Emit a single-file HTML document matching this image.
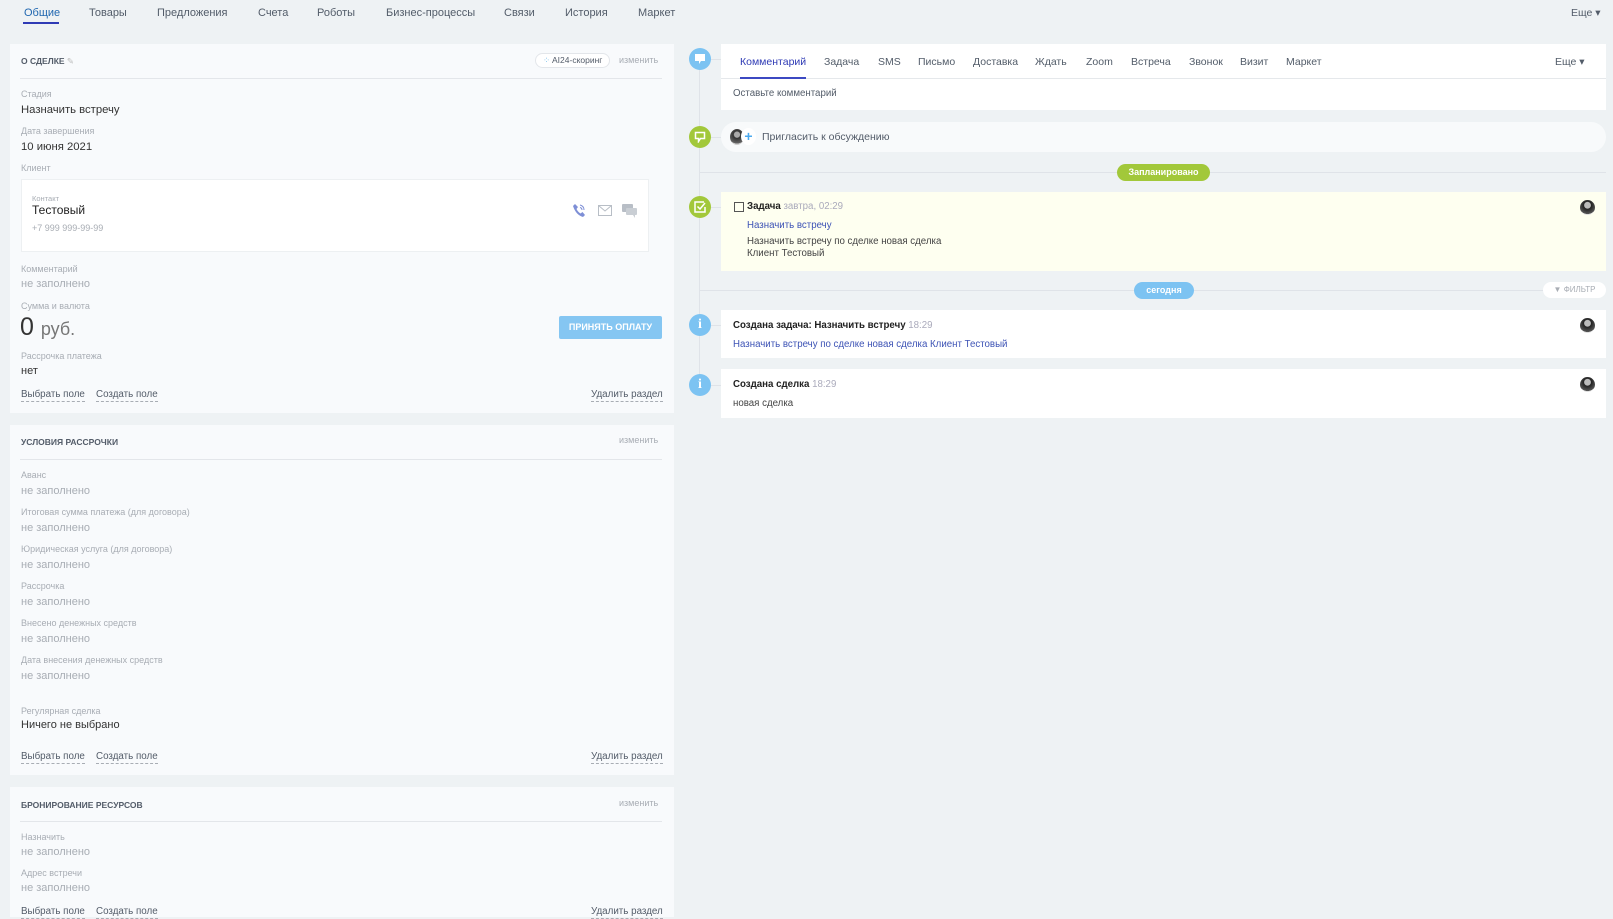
<!DOCTYPE html>
<html><head><meta charset="utf-8">
<style>
*{margin:0;padding:0;box-sizing:border-box}
body{width:1613px;height:911px;background:#eef2f4;font-family:"Liberation Sans",Arial,sans-serif;color:#333;position:relative;overflow:hidden}
.a{position:absolute;white-space:nowrap}
.tab{font-size:11px;color:#525c69;top:7px}
.card{position:absolute;background:#f8fafc;left:10px;width:664px}
.lbl{font-size:9px;color:#a8adb4}
.val{font-size:11.3px;color:#333}
.emp{font-size:11px;color:#a8adb4}
.hdr{font-size:8.5px;font-weight:bold;color:#535c69}
.chg{font-size:9px;color:#a8adb4}
.hr{position:absolute;height:1px;background:#e3e6ea;left:10px;width:642px}
.lnk{font-size:9.8px;color:#535c69;border-bottom:1px dashed #a8adb4;line-height:12px}
.rc{position:absolute;left:721px;width:885px;background:#fff}
.dot{position:absolute;left:689px;width:22px;height:22px;border-radius:50%}
.ttab{font-size:10.5px;color:#525c69;top:56px}
.av{position:absolute;left:1580px;width:15px;height:15px;border-radius:50%;background:radial-gradient(circle at 50% 35%,#bbb 0 25%,#222 30%,#555 70%,#ddd 72%)}
.s{font-size:9.7px}
</style></head><body>
<div class="a tab" style="left:24px;color:#2067b0">Общие</div>
<div class="a" style="left:23px;top:22px;width:36px;height:2px;background:#2f3bb5"></div>
<div class="a tab" style="left:89px">Товары</div>
<div class="a tab" style="left:157px">Предложения</div>
<div class="a tab" style="left:258px">Счета</div>
<div class="a tab" style="left:317px">Роботы</div>
<div class="a tab" style="left:386px">Бизнес-процессы</div>
<div class="a tab" style="left:504px">Связи</div>
<div class="a tab" style="left:565px">История</div>
<div class="a tab" style="left:638px">Маркет</div>
<div class="a tab" style="left:1571px;font-size:10.5px">Еще ▾</div>

<div class="card" style="top:44px;height:369px"></div>
<div class="a hdr" style="left:21px;top:56px">О СДЕЛКЕ <span style="color:#bbb;font-weight:normal">✎</span></div>
<div class="a" style="left:535px;top:53px;height:15px;padding:0 7px;border:1px solid #e3e6ea;border-radius:8px;background:#fff;font-size:8.5px;line-height:13px;color:#535c69"><span style="color:#7ac0ea">⁘</span> AI24-скоринг</div>
<div class="a chg" style="left:619px;top:55px">изменить</div>
<div class="hr" style="left:20px;top:78px;width:642px"></div>
<div class="a lbl" style="left:21px;top:89px">Стадия</div>
<div class="a val" style="left:21px;top:104px">Назначить встречу</div>
<div class="a lbl" style="left:21px;top:126px">Дата завершения</div>
<div class="a val" style="left:21px;top:141px">10 июня 2021</div>
<div class="a lbl" style="left:21px;top:163px">Клиент</div>
<div class="a" style="left:21px;top:179px;width:628px;height:73px;background:#fff;border:1px solid #edf0f2"></div>
<div class="a" style="left:32px;top:194px;font-size:7.5px;color:#a8adb4">Контакт</div>
<div class="a" style="left:32px;top:203px;font-size:12px;color:#222">Тестовый</div>
<div class="a" style="left:32px;top:223px;font-size:9px;color:#a8adb4">+7 999 999-99-99</div>
<svg class="a" style="left:572px;top:203px" width="14" height="15" viewBox="0 0 14 15"><path d="M3 1 L6 4 L4.5 6 Q6 9 8.5 10.5 L10.5 9 L13 12 L11 14 Q4 12 1 3 Z" fill="#7e8fd6"/><path d="M8 2 Q12 3 12 7 M8 4.5 Q10 5 10 7" stroke="#7e8fd6" fill="none"/></svg>
<svg class="a" style="left:598px;top:205px" width="14" height="11"><rect x="0.5" y="0.5" width="13" height="10" fill="none" stroke="#b8bec6"/><path d="M0.5 0.5 L7 6 L13.5 0.5" fill="none" stroke="#b8bec6"/></svg>
<svg class="a" style="left:622px;top:204px" width="15" height="14"><rect x="0" y="0" width="11" height="8" rx="1" fill="#b8bec6"/><rect x="4" y="4" width="11" height="7" rx="1" fill="#c9ced4"/><path d="M11 11 L13 14 L13 11Z" fill="#c9ced4"/></svg>
<div class="a lbl" style="left:21px;top:264px">Комментарий</div>
<div class="a emp" style="left:21px;top:278px">не заполнено</div>
<div class="a lbl" style="left:21px;top:301px">Сумма и валюта</div>
<div class="a" style="left:20px;top:313px;font-size:25px;color:#333">0 <span style="font-size:18px;color:#777">руб.</span></div>
<div class="a" style="left:559px;top:316px;width:103px;height:23px;background:#85c6f2;color:#fff;font-size:9px;font-weight:bold;text-align:center;line-height:23px;border-radius:2px">ПРИНЯТЬ ОПЛАТУ</div>
<div class="a lbl" style="left:21px;top:351px">Рассрочка платежа</div>
<div class="a val" style="left:21px;top:365px;font-size:11px">нет</div>
<div class="a lnk" style="left:21px;top:389px">Выбрать поле</div>
<div class="a lnk" style="left:96px;top:389px">Создать поле</div>
<div class="a lnk" style="left:591px;top:389px">Удалить раздел</div>

<div class="card" style="top:425px;height:350px"></div>
<div class="a hdr" style="left:21px;top:437px">УСЛОВИЯ РАССРОЧКИ</div>
<div class="a chg" style="left:619px;top:435px">изменить</div>
<div class="hr" style="left:20px;top:459px"></div>
<div class="a lbl" style="left:21px;top:470px">Аванс</div><div class="a emp" style="left:21px;top:485px">не заполнено</div>
<div class="a lbl" style="left:21px;top:507px">Итоговая сумма платежа (для договора)</div><div class="a emp" style="left:21px;top:522px">не заполнено</div>
<div class="a lbl" style="left:21px;top:544px">Юридическая услуга (для договора)</div><div class="a emp" style="left:21px;top:559px">не заполнено</div>
<div class="a lbl" style="left:21px;top:581px">Рассрочка</div><div class="a emp" style="left:21px;top:596px">не заполнено</div>
<div class="a lbl" style="left:21px;top:618px">Внесено денежных средств</div><div class="a emp" style="left:21px;top:633px">не заполнено</div>
<div class="a lbl" style="left:21px;top:655px">Дата внесения денежных средств</div><div class="a emp" style="left:21px;top:670px">не заполнено</div>
<div class="a lbl" style="left:21px;top:706px">Регулярная сделка</div><div class="a val" style="left:21px;top:719px;font-size:11px">Ничего не выбрано</div>
<div class="a lnk" style="left:21px;top:751px">Выбрать поле</div>
<div class="a lnk" style="left:96px;top:751px">Создать поле</div>
<div class="a lnk" style="left:591px;top:751px">Удалить раздел</div>

<div class="card" style="top:787px;height:130px"></div>
<div class="a hdr" style="left:21px;top:800px">БРОНИРОВАНИЕ РЕСУРСОВ</div>
<div class="a chg" style="left:619px;top:798px">изменить</div>
<div class="hr" style="left:20px;top:821px"></div>
<div class="a lbl" style="left:21px;top:832px">Назначить</div><div class="a emp" style="left:21px;top:846px">не заполнено</div>
<div class="a lbl" style="left:21px;top:868px">Адрес встречи</div><div class="a emp" style="left:21px;top:882px">не заполнено</div>
<div class="a lnk" style="left:21px;top:906px">Выбрать поле</div>
<div class="a lnk" style="left:96px;top:906px">Создать поле</div>
<div class="a lnk" style="left:591px;top:906px">Удалить раздел</div>

<div class="a" style="left:699px;top:60px;width:1px;height:326px;background:#dfe3e8"></div>
<div class="a" style="left:700px;top:59px;width:21px;height:1px;background:#dfe3e8"></div>
<div class="a" style="left:700px;top:137px;width:21px;height:1px;background:#dfe3e8"></div>
<div class="a" style="left:700px;top:207px;width:21px;height:1px;background:#dfe3e8"></div>
<div class="a" style="left:700px;top:325px;width:21px;height:1px;background:#dfe3e8"></div>
<div class="a" style="left:700px;top:385px;width:21px;height:1px;background:#dfe3e8"></div>

<div class="dot" style="top:48px;background:#7cc3f2"></div>
<svg class="a" style="left:694px;top:53px" width="12" height="12"><path d="M1 1 H11 V8 H7 L5 11 L5 8 H1Z" fill="#fff"/></svg>
<div class="dot" style="top:126px;background:#a2c83a"></div>
<svg class="a" style="left:694px;top:131px" width="12" height="12"><path d="M1.5 1.5 H10.5 V7.5 H6.5 L4.5 10.5 V7.5 H1.5Z" fill="none" stroke="#fff" stroke-width="1.5"/></svg>
<div class="dot" style="top:196px;background:#a2c83a"></div>
<svg class="a" style="left:694px;top:201px" width="12" height="12"><path d="M10 1 H1 V11 H11 V6" fill="none" stroke="#fff" stroke-width="1.5"/><path d="M3.5 5.5 L6 8 L11 2" fill="none" stroke="#fff" stroke-width="1.5"/></svg>
<div class="dot" style="top:314px;background:#7cc3f2"></div>
<div class="a" style="left:689px;top:317px;width:22px;text-align:center;color:#fff;font-size:14px;font-weight:bold;font-family:'Liberation Serif',serif">i</div>
<div class="dot" style="top:374px;background:#7cc3f2"></div>
<div class="a" style="left:689px;top:377px;width:22px;text-align:center;color:#fff;font-size:14px;font-weight:bold;font-family:'Liberation Serif',serif">i</div>

<div class="rc" style="top:44px;height:66px"></div>
<div class="a" style="left:721px;top:78px;width:885px;height:1px;background:#e5e8eb"></div>
<div class="a ttab" style="left:740px;color:#2f3bb5">Комментарий</div>
<div class="a" style="left:740px;top:77px;width:66px;height:2px;background:#3c49c2"></div>
<div class="a ttab" style="left:824px">Задача</div>
<div class="a ttab" style="left:878px">SMS</div>
<div class="a ttab" style="left:918px">Письмо</div>
<div class="a ttab" style="left:973px">Доставка</div>
<div class="a ttab" style="left:1035px">Ждать</div>
<div class="a ttab" style="left:1086px">Zoom</div>
<div class="a ttab" style="left:1131px">Встреча</div>
<div class="a ttab" style="left:1189px">Звонок</div>
<div class="a ttab" style="left:1240px">Визит</div>
<div class="a ttab" style="left:1286px">Маркет</div>
<div class="a ttab" style="left:1555px;font-size:10.5px">Еще ▾</div>
<div class="a s" style="left:733px;top:88px;color:#535c69">Оставьте комментарий</div>

<div class="a" style="left:721px;top:122px;width:885px;height:30px;border-radius:15px;background:#f8fafb"></div>
<div class="a" style="left:730px;top:129px;width:14px;height:16px;border-radius:50%;background:radial-gradient(circle at 50% 35%,#aaa 0 22%,#333 28%,#666 70%,#ccc 72%)"></div>
<div class="a" style="left:741px;top:128px;width:15px;height:17px;border-radius:50%;background:#fff;color:#4ba9ee;font-size:14px;line-height:16px;text-align:center;font-weight:bold">+</div>
<div class="a" style="left:762px;top:131px;font-size:10.5px;color:#535c69">Пригласить к обсуждению</div>

<div class="a" style="left:700px;top:172px;width:906px;height:1px;background:#dfe3e8"></div>
<div class="a" style="left:1117px;top:164px;width:93px;height:17px;border-radius:9px;background:#a2c83a;color:#fff;font-size:9px;font-weight:bold;text-align:center;line-height:17px">Запланировано</div>

<div class="rc" style="top:192px;height:79px;background:#fefff0"></div>
<div class="a" style="left:734px;top:202px;width:10px;height:10px;border:1px solid #555"></div>
<div class="a s" style="left:747px;top:201px;color:#222"><b>Задача</b> <span style="color:#aab">завтра, 02:29</span></div>
<div class="a s" style="left:747px;top:220px;color:#3d53b5">Назначить встречу</div>
<div class="a s" style="left:747px;top:236px;color:#444">Назначить встречу по сделке новая сделка</div>
<div class="a s" style="left:747px;top:248px;color:#444">Клиент Тестовый</div>
<div class="av" style="top:200px"></div>

<div class="a" style="left:700px;top:290px;width:906px;height:1px;background:#dfe3e8"></div>
<div class="a" style="left:1134px;top:282px;width:60px;height:17px;border-radius:9px;background:#7cc3f2;color:#fff;font-size:9px;font-weight:bold;text-align:center;line-height:17px">сегодня</div>
<div class="a" style="left:1543px;top:282px;width:63px;height:16px;border-radius:8px;background:#fff;color:#a8adb4;font-size:8px;line-height:16px;text-align:center">▼ ФИЛЬТР</div>

<div class="rc" style="top:310px;height:48px"></div>
<div class="a s" style="left:733px;top:320px;color:#222"><b>Создана задача: Назначить встречу</b> <span style="color:#aab">18:29</span></div>
<div class="a s" style="left:733px;top:339px;color:#3d53b5">Назначить встречу по сделке новая сделка Клиент Тестовый</div>
<div class="av" style="top:318px"></div>

<div class="rc" style="top:369px;height:49px"></div>
<div class="a s" style="left:733px;top:379px;color:#222"><b>Создана сделка</b> <span style="color:#aab">18:29</span></div>
<div class="a s" style="left:733px;top:398px;color:#444">новая сделка</div>
<div class="av" style="top:377px"></div>
</body></html>
